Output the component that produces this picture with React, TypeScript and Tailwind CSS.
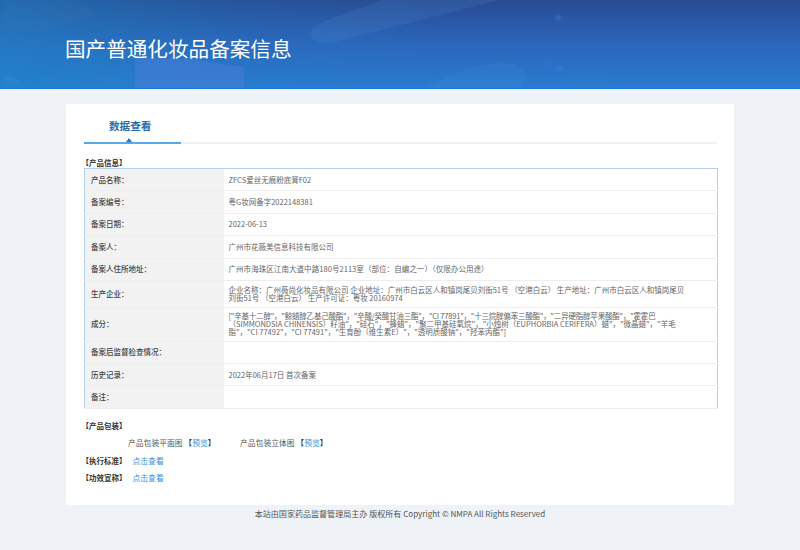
import React from "react";

const rows: { label: string; value: React.ReactNode; h: string }[] = [
  { label: "产品名称：", value: "ZFCS爱丝无痕粉底膏F02", h: "h-[22.4px]" },
  { label: "备案编号：", value: "粤G妆网备字2022148381", h: "h-[22.4px]" },
  { label: "备案日期：", value: "2022-06-13", h: "h-[22.4px]" },
  { label: "备案人：", value: "广州市花薇美信息科技有限公司", h: "h-[22.4px]" },
  { label: "备案人住所地址：", value: <span className="tracking-[0.06px]">广州市海珠区江南大道中路180号2113室（部位：自编之一）（仅限办公用途）</span>, h: "h-[22.4px]" },
  {
    label: "生产企业：",
    value: "企业名称：广州薇尚化妆品有限公司 企业地址：广州市白云区人和镇岗尾贝刘街51号 （空港白云） 生产地址：广州市白云区人和镇岗尾贝刘街51号 （空港白云） 生产许可证：粤妆 20160974",
    h: "h-[26.6px]",
  },
  {
    label: "成分：",
    value: (
      <>
        <span className="block h-[8px] tracking-[-0.2px]">["辛基十二醇"，"鲸蜡醇乙基己酸酯"，"辛酸/癸酸甘油三酯"，"CI 77891"，"十三烷醇偏苯三酸酯"，"二异硬脂醇苹果酸酯"，"霍霍巴</span>
        <span className="block">（SIMMONDSIA CHINENSIS）籽油"，"硅石"，"蜂蜡"，"聚二甲基硅氧烷"，"小烛树（EUPHORBIA CERIFERA）蜡"，"微晶蜡"，"羊毛脂"，"CI 77492"，"CI 77491"，"生育酚（维生素E）"，"透明质酸钠"，"羟苯丙酯"]</span>
      </>
    ),
    h: "h-[34.4px]",
  },
  { label: "备案后监督检查情况：", value: "", h: "h-[22px]" },
  { label: "历史记录：", value: "2022年06月17日 首次备案", h: "h-[22.4px]" },
  { label: "备注：", value: "", h: "h-[22.4px]" },
];

function Banner() {
  return (
    <svg className="absolute inset-0 w-full h-full" viewBox="0 0 800 89">
      <path d="M132 58L190 60L242 68V89H132Z" fill="#4f7fdc" opacity="0.45" />
      <path d="M322 22Q305 30 310 38Q316 46 332 43L500 0H382Z" fill="#5a9ae0" opacity="0.14" />
      <path d="M425 89Q470 64 505 63Q530 66 527 78L522 89Z" fill="#3f9ae6" opacity="0.14" />
      <path d="M560 89Q590 68 610 82L616 89Z" fill="#3f9ae6" opacity="0.08" />
      <path d="M0 0V28L35 33L95 14L70 0Z" fill="#ffffff" opacity="0.015" />
      <path d="M0 75L18 82L0 89Z" fill="#ffffff" opacity="0.03" />
      <circle cx="560" cy="18" r="3.2" fill="#326fc4" opacity="0.8" className="blur-[1px]" />
      <circle cx="551" cy="63.5" r="4.6" fill="#2f71c8" opacity="0.8" className="blur-[1px]" />
      <circle cx="561" cy="69" r="3.2" fill="#347cd2" opacity="0.8" className="blur-[1px]" />
    </svg>
  );
}

export default function App() {
  return (
    <div className="w-[800px] h-[550px] overflow-hidden bg-[#eff3f7] text-[7.5px] leading-[8px] text-[#555] font-['Noto_Sans_CJK_SC','Noto_Sans',sans-serif]">
      <header className="h-[90px] border-b border-[#e4edf7]">
        <div className="relative h-[89px] border-b border-[#1878dc] bg-[linear-gradient(180deg,#294b93_0%,#2c66bb_50%,#2a7bd0_100%)] overflow-hidden">
          <div className="absolute inset-0 bg-[linear-gradient(90deg,rgba(28,136,200,0.5)_0%,rgba(28,136,200,0.15)_30%,rgba(28,136,200,0)_55%)]" />
          <Banner />
          <h1 className="relative pl-[65px] pt-[36px] text-[20.6px] leading-[24px] font-normal text-white">国产普通化妆品备案信息</h1>
        </div>
      </header>

      <main className="mx-[66px] mt-[14px] h-[401px] bg-white px-[17.5px]">
        <div className="relative h-[40px] border-b-2 border-[#eff1f4]">
          <div className="absolute left-0 -bottom-[2px] w-[97px] h-[40px] border-b-2 border-[#5aa9e6]">
            <span className="block pt-[15px] pl-[25.5px] text-[10.6px] leading-[14px] font-bold text-[#2a6db0]">数据查看</span>
            <span className="absolute left-[42px] bottom-0 w-0 h-0 border-x-[3.5px] border-x-transparent border-b-[4px] border-b-[#1c78c8]" />
          </div>
        </div>

        <h2 className="mt-[14.5px] h-[9.5px] font-bold text-[#333] -ml-[2px]">【产品信息】</h2>

        <table className="ml-[0.5px] w-[633.5px] border-collapse border border-[#b0d0ef] table-fixed">
          <tbody>
            {rows.map((r) => (
              <tr key={r.label} className={r.h + " border-b border-[#eeeeee]"}>
                <td className="w-[139px] bg-[#f2f2f2] pl-[6px] font-medium text-[#444] align-middle">{r.label}</td>
                <td className="pl-[5px] pr-[31px] text-[#666] align-middle bg-white">{r.value}</td>
              </tr>
            ))}
          </tbody>
        </table>

        <h2 className="mt-[13px] h-[10px] font-bold text-[#333] -ml-[2px]">【产品包装】</h2>
        <div className="mt-[7px] h-[10px] flex text-[7.8px] text-[#555]">
          <span className="ml-[44.5px] w-[112px]">产品包装平面图 <b className="font-medium text-[#333]">【</b><a className="text-[#3a8ee0]">预览</a><b className="font-medium text-[#333]">】</b></span>
          <span>产品包装立体图 <b className="font-medium text-[#333]">【</b><a className="text-[#3a8ee0]">预览</a><b className="font-medium text-[#333]">】</b></span>
        </div>
        <div className="mt-[8.5px] h-[10px] -ml-[2px] flex gap-[6px]">
          <b className="font-bold text-[#333]">【执行标准】</b><a className="text-[7.8px] text-[#3a8ee0]">点击查看</a>
        </div>
        <div className="mt-[6.5px] h-[10px] -ml-[2px] flex gap-[6px]">
          <b className="font-bold text-[#333]">【功效宣称】</b><a className="text-[7.8px] text-[#3a8ee0]">点击查看</a>
        </div>
      </main>

      <footer className="pt-[4px] text-center text-[8.05px] leading-[10px] text-[#555]">本站由国家药品监督管理局主办 版权所有 Copyright © NMPA All Rights Reserved</footer>
    </div>
  );
}
